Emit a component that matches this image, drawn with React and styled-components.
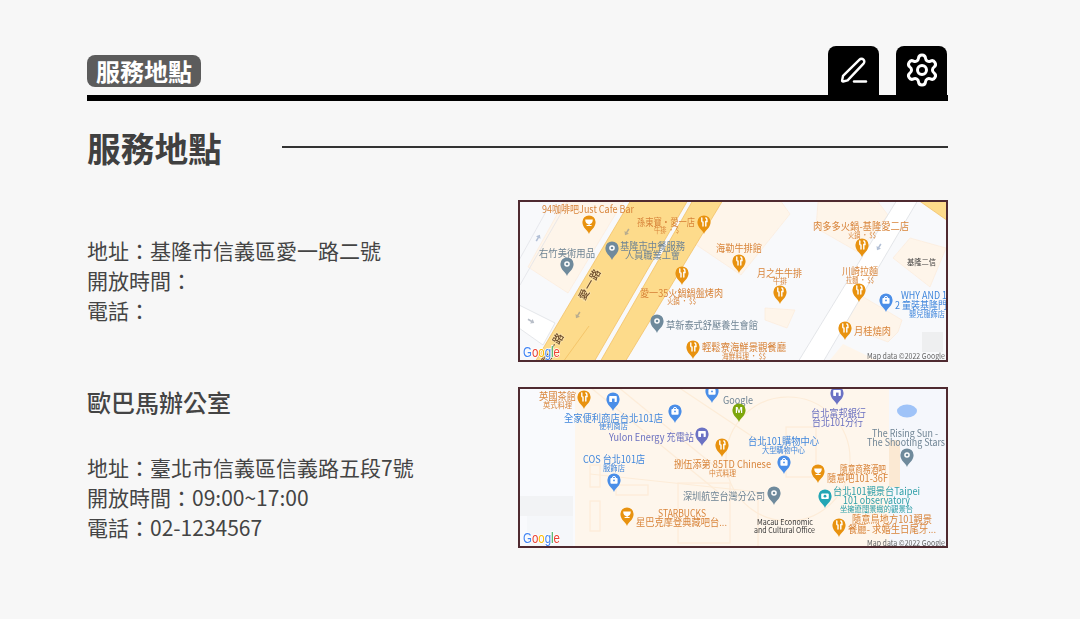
import React from 'react';
import styled, { createGlobalStyle } from 'styled-components';
import { Settings } from 'lucide-react';

const GlobalStyle = createGlobalStyle`
  html, body {
    margin: 0;
    background: #f7f7f7;
    font-family: "Noto Sans CJK TC", "Noto Sans", sans-serif;
    color: #444;
  }
`;

const Page = styled.div`
  width: 861px;
  margin-left: 87px;
  padding-top: 46px;
`;

const Header = styled.header`
  display: flex;
  align-items: flex-end;
  justify-content: space-between;
  padding-right: 1px;
  border-bottom: 6px solid #000;
`;

const Badge = styled.div`
  width: 114px;
  height: 32px;
  margin-bottom: 8px;
  box-sizing: border-box;
  border-radius: 8px;
  background: #5c5c5c;
  color: #fff;
  font-size: 24px;
  font-weight: 700;
  line-height: 32px;
  text-align: center;
`;

const Tabs = styled.div`
  display: flex;
  gap: 17px;
`;

const Tab = styled.button`
  display: flex;
  align-items: center;
  justify-content: center;
  width: 51px;
  height: 49px;
  padding: 0 0 2px;
  border: 0;
  border-radius: 8px 8px 0 0;
  background: #000;
  color: #fff;
`;

const TitleRow = styled.div`
  display: flex;
  align-items: center;
  height: 94px;
  margin-bottom: 5px;
`;

const Title = styled.h1`
  width: 195px;
  margin: 0;
  font-size: 33.7px;
  font-weight: 700;
  line-height: 94px;
  color: #404040;
`;

const Rule = styled.div`
  flex: 1;
  height: 2px;
  margin-bottom: 2px;
  background: #333;
`;

const Sections = styled.div`
  display: flex;
  flex-direction: column;
  gap: 25px;
`;

const Section = styled.section`
  display: grid;
  grid-template-columns: 431px 430px;
  align-items: center;
`;

const Info = styled.div`
  padding-bottom: 2px;
  font-size: 21px;
  line-height: 30px;
`;

const OfficeName = styled.h2`
  margin: 0 0 39px;
  font-size: 24px;
  font-weight: 500;
  line-height: 22px;
  color: #444;
`;

const MapFrame = styled.svg`
  display: block;
  width: 430px;
  height: ${(p) => p.$h}px;
  box-sizing: border-box;
  border: 2px solid #4f2a30;
  background: ${(p) => p.$bg};
`;

const MapContent = styled.g`
  filter: blur(0.3px);
`;

const tones = {
  food: '#d8843a',
  place: '#6f8494',
  shop: '#3f86dc',
  bank: '#6a70c0',
  teal: '#2f9fa8',
  dark: '#3a3a3a',
  credit: '#666',
};

const MapText = styled.text`
  fill: ${(p) => tones[p.$tone]};
  font-family: "Noto Sans CJK TC", sans-serif;
  font-size: ${(p) => p.$size}px;
  font-weight: 400;
`;

const RoadName = styled.text`
  fill: #6d4c2b;
  font-family: "Noto Sans CJK TC", sans-serif;
  font-size: 10.5px;
  font-weight: 500;
  stroke: #fbe2a8;
  stroke-width: 1.5px;
  paint-order: stroke;
`;

const GoogleMark = styled.text`
  font-family: "Liberation Sans", sans-serif;
  font-size: 14px;
  font-weight: 400;
  stroke: #fff;
  stroke-width: 1.5px;
  paint-order: stroke;
`;

const pinColors = {
  food: '#e8920f',
  place: '#6f8a9c',
  shop: '#4a8ee8',
  bank: '#6b72c4',
  teal: '#23a6b5',
  green: '#7da60c',
};

// 畫在圖釘頭部的白色小圖
const PinGlyph = ({ kind, color }) => {
  if (kind === 'fork') {
    return (
      <g stroke="#fff" strokeWidth="1.4" fill="none" strokeLinecap="round">
        <path d="M-2.2 -6v3a1.2 1.2 0 0 0 1.2 1.2V2" />
        <path d="M1.8 -6c1.2 0 1.2 2 1.2 3.5h-1.2V2" />
      </g>
    );
  }
  if (kind === 'cup') {
    return <path d="M-3.8 -4.5h7.6c0 3-1.5 4.5-3.2 4.7V1h2v1h-5V1h2v-.8C-2.3 0-3.8-1.5-3.8-4.5z" fill="#fff" />;
  }
  if (kind === 'bag') {
    return (
      <g>
        <rect x="-3.6" y="-4" width="7.2" height="5.8" rx="1" fill="#fff" />
        <path d="M-1.6 -4a1.6 1.6 0 0 1 3.2 0" stroke="#fff" fill="none" strokeWidth="1" />
        <circle cx="0" cy="-1.6" r="0.9" fill={color} />
      </g>
    );
  }
  if (kind === 'store') {
    return (
      <g>
        <rect x="-3.8" y="-5" width="7.6" height="6" rx="0.8" fill="#fff" />
        <rect x="-1" y="-2.4" width="2.6" height="3.4" fill={color} />
      </g>
    );
  }
  if (kind === 'camera') {
    return (
      <g>
        <rect x="-3.8" y="-4.5" width="7.6" height="5.4" rx="1" fill="#fff" />
        <circle cx="0" cy="-1.8" r="1.4" fill={color} />
      </g>
    );
  }
  if (kind === 'm') {
    return (
      <text x="0" y="0.6" textAnchor="middle" fontSize="9" fontWeight="700" fontFamily="Liberation Sans, sans-serif" fill="#fff">
        M
      </text>
    );
  }
  return (
    <g>
      <circle cx="0" cy="-2" r="2.8" fill="#fff" />
      <circle cx="0" cy="-2" r="1.3" fill={color} />
    </g>
  );
};

const Pin = ({ x, y, tone, kind }) => (
  <g transform={`translate(${x} ${y})`}>
    <path
      d="M0 10C-1.2 6-6.6 4-6.6-2A6.6 6.6 0 1 1 6.6-2C6.6 4 1.2 6 0 10Z"
      fill={pinColors[tone]}
    />
    <PinGlyph kind={kind} color={pinColors[tone]} />
  </g>
);

const PenIcon = () => (
  <svg width="30" height="30" viewBox="0 0 30 30" fill="none" stroke="currentColor" strokeWidth="2.4" strokeLinecap="round" strokeLinejoin="round">
    <path d="M4 26.5c-.6 0-1-.5-.9-1l.9-4.6L20.5 4.6a2.8 2.8 0 0 1 4 4L8.6 25.4l-4.6 1.1Z" />
    <path d="M15 26.5h12" />
  </svg>
);

const RoadArrow = ({ x, y, angle, color }) => (
  <path
    transform={`translate(${x} ${y}) rotate(${angle})`}
    d="M-3.5 -0.8H0.5V-2.6L3.8 0L0.5 2.6V0.8H-3.5Z"
    fill={color}
  />
);

// [左, 基線, 文字, 寬, 色調, 字級]
const labelsA = [
  [24, 13, '94咖啡吧Just Cafe Bar', 92, 'food', 10],
  [119, 26, '孫東寶·愛一店', 58, 'food', 10],
  [136, 33, '牛排 · $', 25, 'food', 7.5],
  [21, 57, '右竹美術用品', 56, 'place', 10],
  [102, 50, '基隆市中餐服務', 65, 'place', 10],
  [107, 59, '人員職業工會', 55, 'place', 10],
  [198, 52, '海勒牛排館', 46, 'food', 10],
  [122, 97, '愛一35火鍋鍋盤烤肉', 83, 'food', 10],
  [149, 104, '火鍋 · $$', 29, 'food', 7.5],
  [148, 129, '草新泰式舒壓養生會館', 92, 'place', 10],
  [184, 151, '輕鬆寮海鮮景觀餐廳', 84, 'food', 10],
  [204, 159, '海鮮料理 · $$', 44, 'food', 7.5],
  [295, 30, '肉多多火鍋-基隆愛二店', 96, 'food', 10],
  [330, 38, '火鍋 · $$', 28, 'food', 7.5],
  [239, 77, '月之牛牛排', 45, 'food', 10],
  [255, 84, '牛排', 14, 'food', 7.5],
  [324, 75, '川崎拉麵', 36, 'food', 10],
  [328, 83, '拉麵 · $$', 28, 'food', 7.5],
  [389, 65, '基隆二信', 29, 'dark', 7.5],
  [383, 99, 'WHY AND 1', 46, 'shop', 10],
  [377, 109, '2 童裝基隆門', 52, 'shop', 10],
  [391, 117, '嬰兒服飾店', 36, 'shop', 7.5],
  [336, 135, '月桂燒肉', 37, 'food', 10],
  [349, 159, 'Map data ©2022 Google', 78, 'credit', 8],
];

const pinsA = [
  [71, 24, 'food', 'cup'],
  [186, 24, 'food', 'fork'],
  [49, 66, 'place', 'dot'],
  [94, 50, 'place', 'dot'],
  [164, 75, 'food', 'fork'],
  [139, 123, 'place', 'dot'],
  [175, 149, 'food', 'fork'],
  [221, 63, 'food', 'fork'],
  [262, 94, 'food', 'fork'],
  [344, 47, 'food', 'fork'],
  [341, 92, 'food', 'fork'],
  [368, 102, 'shop', 'bag'],
  [327, 130, 'food', 'fork'],
];

const labelsB = [
  [21, 13, '英國茶館', 37, 'food', 10],
  [25, 21, '英式料理', 29, 'food', 7.5],
  [46, 35, '全家便利商店台北101店', 99, 'shop', 10],
  [81, 42, '便利商店', 29, 'shop', 7.5],
  [91, 54, 'Yulon Energy 充電站', 85, 'bank', 10],
  [156, 81, '捌伍添第 85TD Chinese', 97, 'food', 10],
  [191, 89, '中式料理', 27, 'food', 7.5],
  [65, 76, 'COS 台北101店', 62, 'shop', 10],
  [85, 84, '服飾店', 22, 'shop', 7.5],
  [165, 113, '深圳航空台灣分公司', 82, 'place', 10],
  [140, 130, 'STARBUCKS', 48, 'food', 10],
  [118, 139, '星巴克摩登典藏吧台...', 91, 'food', 10],
  [205, 17, 'Google', 30, 'place', 10],
  [293, 30, '台北富邦銀行', 55, 'bank', 10],
  [294, 39, '台北101分行', 51, 'bank', 10],
  [354, 50, 'The Rising Sun -', 66, 'place', 10],
  [349, 59, 'The Shooting Stars', 78, 'place', 10],
  [230, 58, '台北101購物中心', 71, 'shop', 10],
  [244, 66, '大型購物中心', 43, 'shop', 7.5],
  [322, 86, '隨意商務酒吧', 46, 'food', 10],
  [309, 95, '隨意吧101-36F', 61, 'food', 10],
  [315, 108, '台北101觀景台Taipei', 87, 'teal', 10],
  [325, 117, '101 observatory', 67, 'teal', 10],
  [322, 125, '坐擁遼闊景緻的觀景台', 73, 'teal', 7.5],
  [239, 138, 'Macau Economic', 56, 'dark', 8],
  [236, 146, 'and Cultural Office', 61, 'dark', 8],
  [334, 136, '隨意鳥地方101觀景', 80, 'food', 10],
  [330, 146, '餐廳- 求婚生日尾牙...', 88, 'food', 10],
  [349, 159, 'Map data ©2022 Google', 78, 'credit', 8],
];

const pinsB = [
  [66, 12, 'food', 'fork'],
  [95, 14, 'shop', 'store'],
  [157, 26, 'shop', 'bag'],
  [194, 6, 'shop', 'bag'],
  [184, 49, 'bank', 'store'],
  [204, 60, 'food', 'fork'],
  [96, 95, 'shop', 'bag'],
  [256, 108, 'place', 'dot'],
  [109, 129, 'food', 'cup'],
  [221, 25, 'green', 'm'],
  [319, 8, 'bank', 'store'],
  [389, 70, 'place', 'dot'],
  [266, 77, 'shop', 'bag'],
  [300, 86, 'food', 'cup'],
  [307, 111, 'teal', 'camera'],
  [321, 140, 'food', 'fork'],
];

const Labels = ({ items }) =>
  items.map(([x, y, text, width, tone, size]) => (
    <MapText
      key={`${x}-${y}`}
      x={x}
      y={y}
      $tone={tone}
      $size={size}
      textLength={width}
      lengthAdjust="spacingAndGlyphs"
    >
      {text}
    </MapText>
  ));

const Pins = ({ items }) =>
  items.map(([x, y, tone, kind]) => <Pin key={`${x}-${y}`} x={x} y={y} tone={tone} kind={kind} />);

const GoogleLogo = ({ y }) => (
  <GoogleMark x="5" y={y} textLength="37" lengthAdjust="spacingAndGlyphs">
    <tspan fill="#4285f4">G</tspan>
    <tspan fill="#ea4335">o</tspan>
    <tspan fill="#fbbc05">o</tspan>
    <tspan fill="#4285f4">g</tspan>
    <tspan fill="#34a853">l</tspan>
    <tspan fill="#ea4335">e</tspan>
  </GoogleMark>
);

const KeelungMap = () => (
  <MapFrame $h={162} $bg="#f8f9fb" viewBox="2 2 426 158" preserveAspectRatio="none">
    <MapContent>
      {/* 街廓 */}
      <path d="M10 67 L50 93 L100 10 L107 0 L47 0 Z" fill="#fef5ea" stroke="#fbe9d6" strokeWidth="0.6" />
      <path d="M2 85 L50 1 M0 62 L30 8" stroke="#dfe1e6" strokeWidth="0.7" fill="none" />
      <path d="M1 105 L37 123 L25 145 L1 128 Z" fill="#fff" stroke="#d5d8dd" strokeWidth="0.6" />
      <path d="M177 44 L223 75 L272 14 L262 0 L203 0 Z" fill="#fef5ea" stroke="#fbe9d6" strokeWidth="0.6" />
      <path d="M300 2 L360 2 L370 15 L340 52 L298 28 Z" fill="#fef5ea" stroke="#fbe9d6" strokeWidth="0.6" />
      <path d="M247 108 L277 110 L269 128 L247 120 Z" fill="#fef5ea" stroke="#fbe9d6" strokeWidth="0.6" />
      <path d="M330 112 L342 95 L384 120 L380 132 L370 142 L325 125 Z" fill="#fef5ea" stroke="#fbe9d6" strokeWidth="0.6" />
      <path d="M375 58 L392 38 L428 48 L412 87 Z" fill="#fef5ea" stroke="#fbe9d6" strokeWidth="0.6" />
      <path d="M312 160 L325 144 L358 160 Z" fill="#fef5ea" />
      <path d="M404 132 L425 132 L425 152 L404 152 Z" fill="#eeeff0" />
      {/* 道路 */}
      <path d="M113 0 L170 0 L76 162 L17 162 Z" fill="#fddb8b" stroke="#f0bb5c" strokeWidth="0.7" />
      <path d="M175 0 L205 0 L107 162 L82 162 Z" fill="#fddb8b" stroke="#f0bb5c" strokeWidth="0.7" />
      <path d="M71 126 L45 162" stroke="#f0bb5c" strokeWidth="0.7" fill="none" />
      <path d="M280 162 L379 0 L400 0 L305 162 Z" fill="#fff" stroke="#d8dbe0" strokeWidth="0.7" />
      <path d="M400 0 L430 0 L430 21 Z" fill="#fddb8b" stroke="#f0bb5c" strokeWidth="0.7" />
      <RoadArrow x={109} y={32} angle={122} color="#b9ad8e" />
      <RoadArrow x={60} y={115} angle={122} color="#b9ad8e" />
      <RoadArrow x={20} y={38} angle={-60} color="#b3c0d6" />
      <RoadArrow x={13} y={121} angle={30} color="#b8bec8" />
      <RoadArrow x={361} y={47} angle={122} color="#b3c0d6" />
      <RoadName x="0" y="0" textAnchor="middle" transform="translate(75 86) rotate(-60)" letterSpacing="1">愛一路</RoadName>
      <RoadName x="0" y="0" textAnchor="middle" transform="translate(38 150) rotate(-60)" letterSpacing="1">愛一路</RoadName>
      <Labels items={labelsA} />
      <Pins items={pinsA} />
      <GoogleLogo y={157} />
    </MapContent>
  </MapFrame>
);

const TaipeiMap = () => (
  <MapFrame $h={161} $bg="#f9fafd" viewBox="2 2 426 157" preserveAspectRatio="none">
    <MapContent>
      {/* 園區底色 */}
      <rect x="57" y="0" width="314" height="162" fill="#fef6ec" />
      <rect x="1" y="109" width="54" height="20" fill="#f2f3f5" />
      <rect x="9" y="129" width="46" height="30" fill="#f5f7fa" />
      <rect x="371" y="0" width="59" height="162" fill="#f5f7fc" />
      <rect x="371" y="53" width="11" height="47" fill="#fbe9d3" />
      <g fill="none" stroke="#fdecd8" strokeWidth="1.2">
        <path d="M72 0 L200 105" />
        <path d="M100 0 L210 90" />
        <path d="M160 0 L250 60" />
        <circle cx="270" cy="72" r="62" />
        <path d="M72 87 L240 105 L240 160" />
        <rect x="72" y="78" width="10" height="22" />
        <rect x="72" y="114" width="10" height="30" />
        <rect x="98" y="98" width="32" height="10" />
        <rect x="160" y="96" width="52" height="60" />
        <rect x="268" y="40" width="30" height="50" />
      </g>
      <ellipse cx="389" cy="24" rx="10" ry="6.5" fill="#9fc3f8" />
      <Labels items={labelsB} />
      <Pins items={pinsB} />
      <GoogleLogo y={156} />
    </MapContent>
  </MapFrame>
);

// 標籤後接全形冒號
const InfoLine = ({ label, value }) => <div>{`${label}\uFF1A${value}`}</div>;

const App = () => (
  <>
    <GlobalStyle />
    <Page>
      <Header>
        <Badge>服務地點</Badge>
        <Tabs>
          <Tab aria-label="編輯">
            <PenIcon />
          </Tab>
          <Tab aria-label="設定">
            <Settings size={36} strokeWidth={2} />
          </Tab>
        </Tabs>
      </Header>
      <TitleRow>
        <Title>服務地點</Title>
        <Rule />
      </TitleRow>
      <Sections>
        <Section>
          <Info>
            <InfoLine label="地址" value="基隆市信義區愛一路二號" />
            <InfoLine label="開放時間" value="" />
            <InfoLine label="電話" value="" />
          </Info>
          <KeelungMap />
        </Section>
        <Section>
          <Info>
            <OfficeName>歐巴馬辦公室</OfficeName>
            <InfoLine label="地址" value="臺北市信義區信義路五段7號" />
            <InfoLine label="開放時間" value="09:00~17:00" />
            <InfoLine label="電話" value="02-1234567" />
          </Info>
          <TaipeiMap />
        </Section>
      </Sections>
    </Page>
  </>
);

export default App;
